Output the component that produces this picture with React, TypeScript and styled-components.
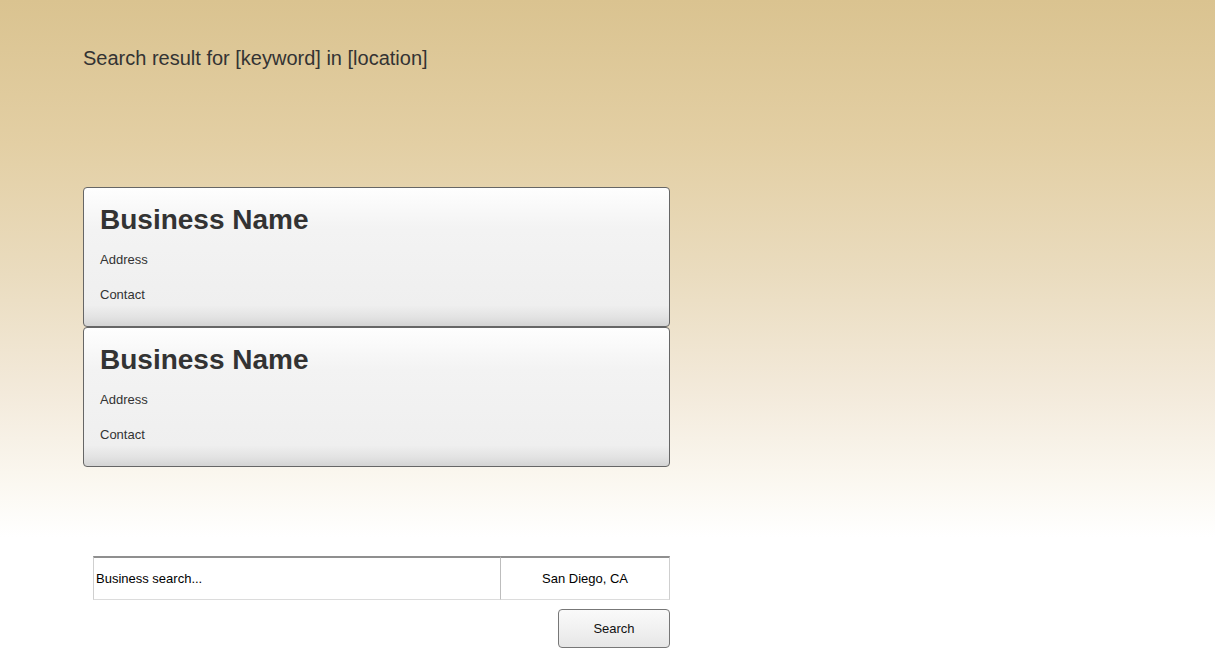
import React from "react";
import styled, { createGlobalStyle } from "styled-components";

const GlobalStyle = createGlobalStyle`
  html, body { margin: 0; padding: 0; background: #ffffff; }
  body { font-family: "Liberation Sans", Arial, sans-serif; }
  * { box-sizing: border-box; }
`;

const Page = styled.div`
  width: 1215px;
  height: 655px;
  padding: 47px 0 0 83px;
  display: flex;
  flex-direction: column;
  align-items: flex-start;
  background: linear-gradient(
    to bottom,
    #dac390 0%,
    #e3cfa4 22%,
    #eadcbf 42%,
    #f3eadb 60%,
    #fbf8f1 74%,
    #ffffff 82%
  );
`;

const Heading = styled.h1`
  margin: 0;
  font-size: 20px;
  line-height: 23px;
  font-weight: normal;
  color: #333;
`;

const Results = styled.div`
  margin-top: 117px;
  width: 587px;
  display: flex;
  flex-direction: column;
`;

const Card = styled.div`
  height: 140px;
  border: 1px solid #666;
  border-radius: 4px;
  padding: 16px 16px 0 16px;
  background: linear-gradient(
    to bottom,
    #fefefe 0%,
    #f3f3f3 30%,
    #efefef 85%,
    #e2e2e2 94%,
    #d4d4d4 100%
  );
  color: #333;
`;

const Name = styled.h2`
  margin: 0;
  font-size: 28px;
  line-height: 32px;
  font-weight: bold;
  color: #333;
`;

const Line = styled.p<{ $gap: number }>`
  margin: ${(p) => p.$gap}px 0 0 0;
  font-size: 13px;
  line-height: 16px;
  color: #333;
`;

const Form = styled.form`
  margin-top: 89px;
  margin-left: 10px;
  width: 577px;
  display: flex;
  flex-direction: column;
  align-items: flex-end;
`;

const InputRow = styled.div`
  width: 100%;
  height: 44px;
  display: flex;
  background: #fff;
`;

const Field = styled.input<{ $center?: boolean; $w: number }>`
  width: ${(p) => p.$w}px;
  height: 44px;
  margin: 0;
  padding: 0 2px;
  border: 1px solid #cfcfcf;
  border-top: 2px solid #8f8f8f;
  border-bottom-color: #dcdcdc;
  border-right-color: #bdbdbd;
  background: #fff;
  font-family: "Liberation Sans", Arial, sans-serif;
  font-size: 13px;
  color: #000;
  text-align: ${(p) => (p.$center ? "center" : "left")};
  outline: none;
  & + & {
    border-left: none;
    border-right-color: #cfcfcf;
  }
  &::placeholder { color: #000; opacity: 1; }
`;

const Button = styled.button`
  margin-top: 9px;
  width: 112px;
  height: 39px;
  border: 1px solid #777;
  border-radius: 4px;
  background: linear-gradient(to bottom, #fafafa 0%, #f1f1f1 50%, #e6e6e6 100%);
  font-family: "Liberation Sans", Arial, sans-serif;
  font-size: 13px;
  color: #111;
  cursor: pointer;
`;

const results = [
  { name: "Business Name", address: "Address", contact: "Contact" },
  { name: "Business Name", address: "Address", contact: "Contact" },
];

export default function App() {
  return (
    <>
      <GlobalStyle />
      <Page>
        <Heading>Search result for [keyword] in [location]</Heading>
        <Results>
          {results.map((r, i) => (
            <Card key={i}>
              <Name>{r.name}</Name>
              <Line $gap={16}>{r.address}</Line>
              <Line $gap={19}>{r.contact}</Line>
            </Card>
          ))}
        </Results>
        <Form onSubmit={(e) => e.preventDefault()}>
          <InputRow>
            <Field $w={408} placeholder="Business search..." />
            <Field $w={169} $center defaultValue="San Diego, CA" />
          </InputRow>
          <Button type="submit">Search</Button>
        </Form>
      </Page>
    </>
  );
}
